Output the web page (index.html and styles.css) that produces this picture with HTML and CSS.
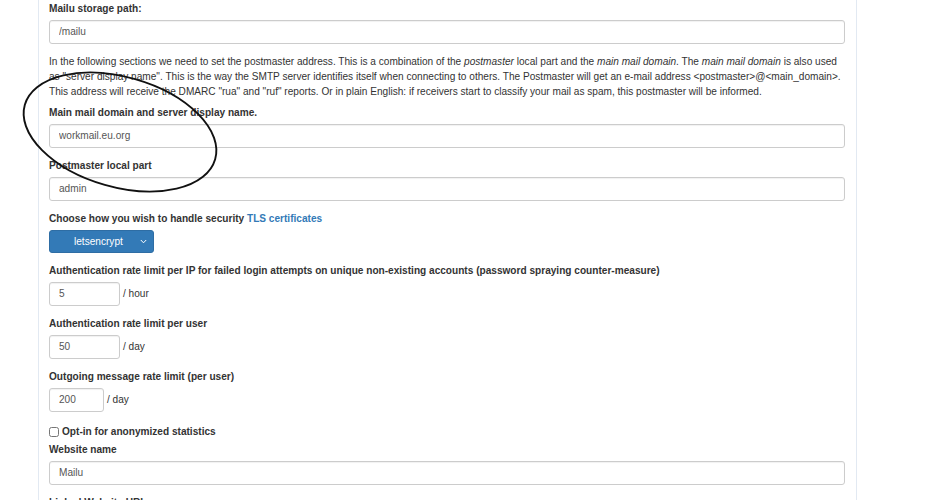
FILE: index.html
```html
<!DOCTYPE html>
<html lang="en">
<head>
    <meta charset="UTF-8">
    <meta name="viewport" content="width=device-width, initial-scale=1.0">
    <title>Mailu Setup</title>
    <link rel="stylesheet" href="styles.css">
</head>
<body>
    <div class="box">
        <div class="form-group">
            <label>Mailu storage path:</label>
            <input class="form-control" type="text" value="/mailu">
        </div>

        <p class="help">In the following sections we need to set the postmaster address. This is a combination of the <i>postmaster</i> local part and the <i>main mail domain</i>. The <i>main mail domain</i> is also used as "server display name". This is the way the SMTP server identifies itself when connecting to others. The Postmaster will get an e-mail address &lt;postmaster&gt;@&lt;main_domain&gt;. This address will receive the DMARC "rua" and "ruf" reports. Or in plain English: if receivers start to classify your mail as spam, this postmaster will be informed.</p>

        <div class="form-group">
            <label>Main mail domain and server display name.</label>
            <input class="form-control" type="text" value="workmail.eu.org">
        </div>

        <div class="form-group">
            <label>Postmaster local part</label>
            <input class="form-control" type="text" value="admin">
        </div>

        <div class="form-group">
            <label>Choose how you wish to handle security <a href="#">TLS certificates</a></label>
            <div class="select-btn">
                <span>letsencrypt</span>
                <svg class="chevron" width="7" height="5" viewBox="0 0 7 5"><path d="M0.8 1 L3.5 3.8 L6.2 1" fill="none" stroke="#fff" stroke-width="1"/></svg>
            </div>
        </div>

        <div class="form-group">
            <label>Authentication rate limit per IP for failed login attempts on unique non-existing accounts (password spraying counter-measure)</label>
            <div class="inline-row">
                <input class="form-control num-wide" type="text" value="5">
                <span class="unit">/ hour</span>
            </div>
        </div>

        <div class="form-group">
            <label>Authentication rate limit per user</label>
            <div class="inline-row">
                <input class="form-control num-wide" type="text" value="50">
                <span class="unit">/ day</span>
            </div>
        </div>

        <div class="form-group">
            <label>Outgoing message rate limit (per user)</label>
            <div class="inline-row">
                <input class="form-control num-narrow" type="text" value="200">
                <span class="unit">/ day</span>
            </div>
        </div>

        <div class="checkbox">
            <label><input type="checkbox"> Opt-in for anonymized statistics</label>
        </div>

        <div class="form-group">
            <label>Website name</label>
            <input class="form-control" type="text" value="Mailu">
        </div>

        <div class="form-group">
            <label>Linked Website URL</label>
            <input class="form-control" type="text" value="https://mailu.io">
        </div>
    </div>

    <svg class="scribble" width="925" height="500" viewBox="0 0 925 500">
        <ellipse cx="120" cy="132" rx="99" ry="55" transform="rotate(16 120 132)" fill="none" stroke="#111" stroke-width="1.9"/>
    </svg>
</body>
</html>
```

FILE: styles.css
```css
body {
    margin: 0;
    background-color: #fff;
    font-family: "Liberation Sans", Arial, sans-serif;
    font-size: 10.1px;
    line-height: 15px;
    color: #333;
    position: relative;
}
.box {
    margin-left: 38px;
    width: 796px;
    padding: 1px 11px 40px 10px;
    border-left: 1px solid #e2e9f2;
    border-right: 1px solid #e2e9f2;
}
.form-group {
    margin-bottom: 10.5px;
}
label {
    display: block;
    font-weight: bold;
    margin-bottom: 3.5px;
}
label a {
    color: #337ab7;
    text-decoration: none;
}
.form-control {
    display: block;
    box-sizing: border-box;
    width: 100%;
    height: 24px;
    padding: 0 9px;
    font-family: inherit;
    font-size: 10.1px;
    color: #555;
    background-color: #fff;
    border: 1px solid #ccc;
    border-radius: 3px;
    box-shadow: inset 0 1px 1px rgba(0,0,0,0.06);
    outline: none;
}
.help {
    margin: 0 0 6px 0;
}
.select-btn {
    display: flex;
    align-items: center;
    box-sizing: border-box;
    width: 105px;
    height: 23px;
    padding: 0 6px 0 24px;
    background-color: #337ab7;
    border: 1px solid #2e6da4;
    border-radius: 3px;
    color: #fff;
}
.select-btn span {
    flex: 1;
}
.inline-row {
    display: flex;
    align-items: center;
}
.inline-row .form-control {
    display: inline-block;
}
.num-wide {
    width: 71px !important;
}
.num-narrow {
    width: 55px !important;
}
.unit {
    margin-left: 3px;
}
.checkbox {
    padding-top: 2px;
    margin-bottom: 3px;
}
.checkbox label {
    display: flex;
    align-items: center;
    margin: 0;
}
.checkbox input {
    width: 10px;
    height: 10px;
    margin: 0 3px 0 0;
}
.scribble {
    position: absolute;
    left: 0;
    top: 0;
    pointer-events: none;
}
```
